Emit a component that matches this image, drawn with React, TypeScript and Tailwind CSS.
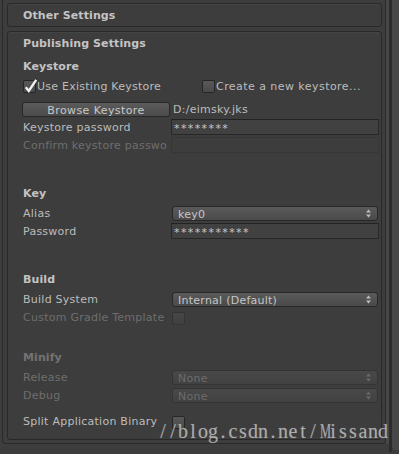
import React from "react";

const Check = ({ checked = false, disabled = false }: { checked?: boolean; disabled?: boolean }) => (
  <div
    className={
      "relative w-[13px] h-[13px] shrink-0 rounded-[2px] border " +
      (disabled
        ? "border-[#333333] bg-gradient-to-b from-[#464646] to-[#404040]"
        : "border-[#262626] bg-gradient-to-b from-[#585858] to-[#4a4a4a]")
    }
  >
    {checked && (
      <svg className="absolute left-[0px] top-[-3px]" width="14" height="15" viewBox="0 0 14 15">
        <path d="M1.8 9.2 L4.8 13 L12.2 1.8" stroke="#f2f2f2" strokeWidth="2.3" fill="none" strokeLinejoin="miter" />
      </svg>
    )}
  </div>
);

const Arrows = ({ dim = false }: { dim?: boolean }) => (
  <svg width="5" height="9" viewBox="0 0 5 9" className="shrink-0">
    <path d="M2.5 0.5 L5 3.5 L0 3.5 Z" fill={dim ? "#6a6a6a" : "#bdbdbd"} />
    <path d="M0 5.5 L5 5.5 L2.5 8.5 Z" fill={dim ? "#6a6a6a" : "#bdbdbd"} />
  </svg>
);

const Dropdown = ({ text, dim = false }: { text: string; dim?: boolean }) => (
  <div
    className={
      "ml-[1px] w-[206px] h-[15px] self-end flex items-center justify-between pl-[5px] pr-[6px] rounded-[3px] border " +
      (dim
        ? "border-[#343434] bg-gradient-to-b from-[#484848] to-[#424242] text-[#6c6c6c]"
        : "border-[#282828] bg-gradient-to-b from-[#5a5a5a] to-[#4a4a4a] text-[#c6c6c6]")
    }
  >
    <span className="leading-[13px] pt-[1px]">{text}</span>
    <Arrows dim={dim} />
  </div>
);

const Field = ({ text = "", disabled = false }: { text?: string; disabled?: boolean }) => (
  <div
    className={
      "w-[208px] h-[16px] flex items-center pl-[2px] border " +
      (disabled ? "border-[#363636] bg-[#3d3d3d]" : "border-[#282828] border-t-[#232323] bg-[#414141]")
    }
  >
    <span className="text-[#c8c8c8] tracking-[1.4px] leading-[14px] pt-[3px]">{text}</span>
  </div>
);

const Label = ({ children, dim = false }: { children: React.ReactNode; dim?: boolean }) => (
  <div
    className={
      "w-[148px] shrink-0 overflow-hidden whitespace-nowrap pt-[2px] " + (dim ? "text-[#6e6e6e]" : "text-[#bcbcbc]")
    }
  >
    {children}
  </div>
);

const Row = ({ mt, children }: { mt: string; children: React.ReactNode }) => (
  <div className={"h-[16px] flex items-center leading-[16px] " + mt}>{children}</div>
);

const Header = ({ mt, children, dim = false }: { mt: string; children: React.ReactNode; dim?: boolean }) => (
  <div
    className={
      "h-[16px] flex items-center font-bold leading-[16px] pt-[2px] tracking-[0.1px] " +
      mt +
      (dim ? " text-[#737373]" : " text-[#c4c4c4]")
    }
  >
    {children}
  </div>
);

const watermark = "//blog.csdn.net/Missand";

export default function App() {
  return (
    <div className="w-[399px] h-[454px] bg-[#3d3d3d] relative overflow-hidden flex font-['DejaVu_Sans',sans-serif] text-[11px] tracking-[0.25px]">
      <div className="w-[2px] shrink-0" />
      <div className="w-[384px] h-[444px] shrink-0 border-l border-r border-b border-[#2a2a2a] rounded-b-[4px] flex flex-col pl-[4px] pr-[3px] pt-[3px]">
        <div className="h-[24px] rounded-[3px] border border-[#292929] shadow-[inset_0_1px_0_rgba(255,255,255,0.04)] flex items-center pl-[15px] pt-[2px] font-bold tracking-[0.1px] text-[#c4c4c4]">
          Other Settings
        </div>
        <div className="mt-[4px] h-[409px] rounded-[3px] border border-[#292929] shadow-[inset_0_1px_0_rgba(255,255,255,0.04)] flex flex-col pl-[15px] pr-[2px]">
          <Header mt="mt-[3px]">Publishing Settings</Header>
          <Header mt="mt-[7px]">Keystore</Header>
          <Row mt="mt-[4px]">
            <div className="w-[179px] flex items-center shrink-0">
              <Check checked />
              <span className="ml-[1px] pt-[2px] text-[#bcbcbc] whitespace-nowrap">Use Existing Keystore</span>
            </div>
            <div className="flex items-center">
              <Check />
              <span className="ml-[1px] pt-[2px] text-[#bcbcbc] whitespace-nowrap tracking-[0.45px]">
                Create a new keystore...
              </span>
            </div>
          </Row>
          <Row mt="mt-[7px]">
            <div className="-ml-[1px] w-[148px] h-[15px] self-end shrink-0 rounded-[3px] border border-[#282828] bg-gradient-to-b from-[#5b5b5b] to-[#4b4b4b] flex items-center justify-center text-[#c8c8c8] leading-[13px] pt-[1px] tracking-[0.4px]">
              Browse Keystore
            </div>
            <span className="ml-[3px] pt-[2px] text-[#bcbcbc] whitespace-nowrap">D:/eimsky.jks</span>
          </Row>
          <Row mt="mt-[2px]">
            <Label>Keystore password</Label>
            <Field text="********" />
          </Row>
          <Row mt="mt-[2px]">
            <Label dim>Confirm keystore passwo</Label>
            <Field disabled />
          </Row>
          <Header mt="mt-[32px]">Key</Header>
          <Row mt="mt-[4px]">
            <Label>Alias</Label>
            <Dropdown text="key0" />
          </Row>
          <Row mt="mt-[2px]">
            <Label>Password</Label>
            <Field text="***********" />
          </Row>
          <Header mt="mt-[32px]">Build</Header>
          <Row mt="mt-[4px]">
            <Label>Build System</Label>
            <Dropdown text="Internal (Default)" />
          </Row>
          <Row mt="mt-[2px]">
            <Label dim>Custom Gradle Template</Label>
            <div className="ml-[1px] mt-[2px]">
              <Check disabled />
            </div>
          </Row>
          <Header mt="mt-[24px]" dim>
            Minify
          </Header>
          <Row mt="mt-[4px]">
            <Label dim>Release</Label>
            <Dropdown text="None" dim />
          </Row>
          <Row mt="mt-[2px]">
            <Label dim>Debug</Label>
            <Dropdown text="None" dim />
          </Row>
          <Row mt="mt-[10px]">
            <Label>Split Application Binary</Label>
            <div className="ml-[1px] mt-[2px]">
              <Check />
            </div>
          </Row>
        </div>
      </div>
      <div className="w-[3px] h-[444px] shrink-0 bg-[#474747]" />
      <div className="w-[3px] h-[452px] shrink-0 bg-[#2c2c2c]" />
      <div className="w-[7px] h-[450px] shrink-0 bg-[#474747] rounded-bl-[4px]" />

      <div className="absolute left-[158px] top-[421px] flex font-['Liberation_Serif',serif] text-[20px] leading-[21px] tracking-normal text-[rgba(200,200,200,0.72)] [text-shadow:0_0_1px_rgba(255,255,255,0.25)] pointer-events-none">
        {watermark.split("").map((c, i) => (
          <span key={i} className={"inline-block w-[10px] text-center " + (c === "M" ? "scale-x-[0.62]" : "")}>
            {c}
          </span>
        ))}
      </div>
    </div>
  );
}
